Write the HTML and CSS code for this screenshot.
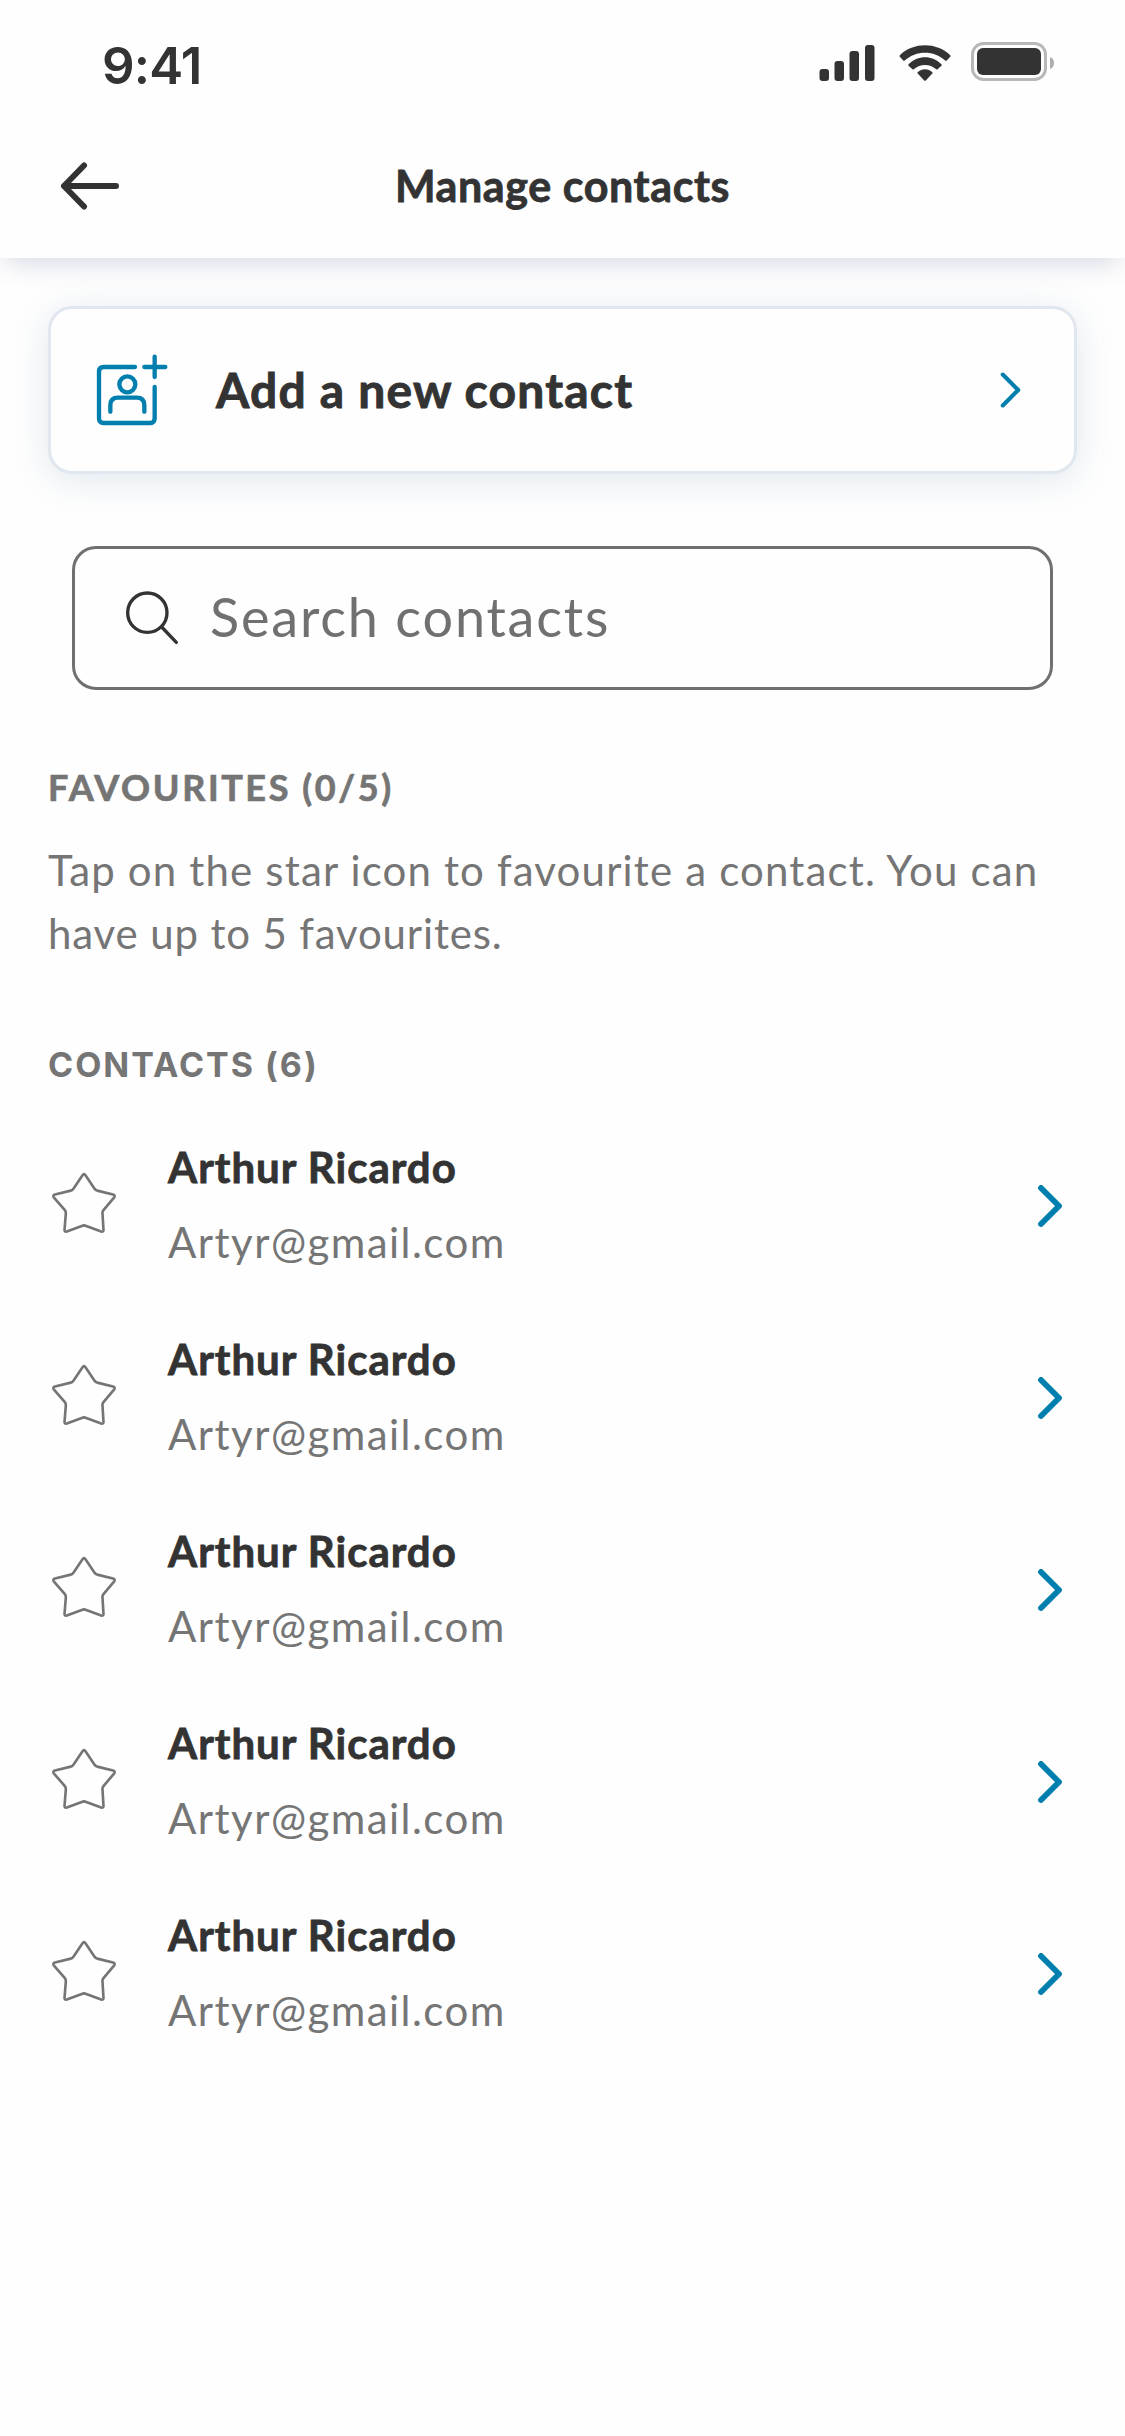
FILE: index.html
```html
<!DOCTYPE html>
<html lang="en">
<head>
<meta charset="utf-8">
<title>Manage contacts</title>
<link rel="stylesheet" href="styles.css">
</head>
<body>
<svg class="sprite" aria-hidden="true">
  <symbol id="star" viewBox="62 424 200 188"><path d="M158 435Q162 428 166 435L194 476Q197 480 202 482L250 494Q258 497 253 503L221 541Q218 545 218 550L221 601Q221 608 214 606L169 589Q162 586 155 589L110 606Q103 608 103 601L107 550Q107 545 104 541L71 503Q66 497 74 494L122 482Q127 481 130 476Z"/></symbol>
  <symbol id="chevron" viewBox="0 0 24 42"><path d="M3 3L21 21L3 39"/></symbol>
</svg>
<header class="header">
  <div class="status">
    <span class="time">9:41</span>
    <div class="indicators">
      <svg class="solid" width="56" height="39" viewBox="0 0 56 39"><rect x="0.5" y="27" width="9.5" height="12" rx="3"/><rect x="15.5" y="19" width="9.5" height="20" rx="3"/><rect x="30.5" y="9" width="9.5" height="30" rx="3"/><rect x="46" y="3" width="9.5" height="36" rx="3"/></svg>
      <svg class="solid" width="52" height="39" viewBox="0 0 52 39"><path d="M.8 13.2C14.500 0 37.500 0 51.200 13.200Q51.900 14 51.200 14.800L47.800 18.400Q47 19.200 46.200 18.500C35 8 17 8 5.800 18.500Q5 19.200 4.200 18.400L.8 14.800Q.1 14 .8 13.200ZM9.600 22.300C18.500 12.900 33.500 12.900 42.400 22.300Q43.100 23 42.400 23.700L38.600 27.300Q38 27.900 37.200 27.300C31 21.400 21 21.400 14.800 27.300Q14 27.900 13.400 27.300L9.600 23.700Q8.900 23 9.600 22.300ZM18.700 30.200C22.500 26.200 29.500 26.200 33.300 30.200Q34 30.900 33.300 31.600L26.800 38.500Q26 39.200 25.200 38.500L18.700 31.600Q18 30.900 18.700 30.200Z"/></svg>
      <svg width="84" height="39" viewBox="0 0 84 39"><rect x="1.500" y="1.500" width="73" height="36" rx="11" fill="none" stroke="#b8b8b8" stroke-width="3"/><rect x="6" y="6" width="64" height="27" rx="6" fill="#333"/><path d="M79 15Q83 16.500 83 21T79 27Z" fill="#adadad"/></svg>
    </div>
  </div>
  <nav class="nav">
    <svg class="back" width="60" height="50" viewBox="0 0 60 50"><path d="M56 25H4M24 4.500L4 25L24 45.500"/></svg>
    <h1 class="title">Manage contacts</h1>
  </nav>
</header>
<main class="content">
  <div class="add">
    <svg class="add-icon" width="72" height="72" viewBox="36 30 216 216"><path d="M153 69H59Q45 69 45 83V223Q45 237 59 237H199Q212 237 212 223V129M181 69H244M212 38V99M79 203V184Q79 161 102 161H158Q181 161 181 184V203"/><circle cx="130" cy="121" r="24"/></svg>
    <span class="add-label">Add a new contact</span>
    <svg class="chevron" width="21" height="36"><use href="#chevron"/></svg>
  </div>
  <div class="search">
    <svg class="search-icon" width="56" height="56" viewBox="42 30 168 168"><circle cx="112" cy="98" r="59"/><path d="M155 141L199 187"/></svg>
    <span class="placeholder">Search contacts</span>
  </div>
  <h2 class="section favourites">FAVOURITES (0/5)</h2>
  <p class="hint">Tap on the star icon to favourite a contact. You can <span class="hint-end">have up to 5 favourites.</span></p>
  <h2 class="section contacts">CONTACTS (6)</h2>
  <ul class="list">
    <li class="row"><svg class="star"><use href="#star"/></svg><div class="person"><span class="name">Arthur Ricardo</span><span class="email">Artyr@gmail.com</span></div><svg class="chevron bold" width="24" height="42"><use href="#chevron"/></svg></li>
    <li class="row"><svg class="star"><use href="#star"/></svg><div class="person"><span class="name">Arthur Ricardo</span><span class="email">Artyr@gmail.com</span></div><svg class="chevron bold" width="24" height="42"><use href="#chevron"/></svg></li>
    <li class="row"><svg class="star"><use href="#star"/></svg><div class="person"><span class="name">Arthur Ricardo</span><span class="email">Artyr@gmail.com</span></div><svg class="chevron bold" width="24" height="42"><use href="#chevron"/></svg></li>
    <li class="row"><svg class="star"><use href="#star"/></svg><div class="person"><span class="name">Arthur Ricardo</span><span class="email">Artyr@gmail.com</span></div><svg class="chevron bold" width="24" height="42"><use href="#chevron"/></svg></li>
    <li class="row"><svg class="star"><use href="#star"/></svg><div class="person"><span class="name">Arthur Ricardo</span><span class="email">Artyr@gmail.com</span></div><svg class="chevron bold" width="24" height="42"><use href="#chevron"/></svg></li>
  </ul>
</main>
</body>
</html>
```
FILE: styles.css
```css
* { box-sizing: border-box; }
body { margin: 0; min-height: 2436px; background: #fefefe; color: #333; font-family: Lato, "Open Sans", sans-serif; }
h1, h2, p, ul { margin: 0; padding: 0; }
svg { display: block; flex: none; fill: none; stroke-linecap: round; stroke-linejoin: round; }
.sprite { display: none; }
.solid { fill: #333; }

.header { height: 258px; background: #fefefe; box-shadow: 0 12px 24px -6px rgba(70, 80, 130, .2); }
.status { display: flex; justify-content: space-between; height: 126px; padding: 42px 70px 0 102px; }
.time { font: 600 51px/48px Inter, sans-serif; letter-spacing: -.8px; }
.indicators { display: flex; }
.indicators svg:nth-child(1) { margin-right: 24px; }
.indicators svg:nth-child(2) { margin-right: 20px; }
.nav { display: grid; grid-template-columns: 120px 1fr 120px; align-items: center; height: 120px; }
.back { margin-left: 60px; stroke: #333; stroke-width: 6; }
.title { text-align: center; font-size: 43px; line-height: 52px; font-weight: 700; letter-spacing: .6px; -webkit-text-stroke: .8px; }

.content { padding: 48px 48px 0; }
.add { display: flex; align-items: center; height: 168px; padding: 0 53px 0 45px; border: 3px solid #e1e7ee; border-radius: 24px; background: #fefefe; box-shadow: 0 6px 36px rgba(60, 100, 150, .15); }
.add-icon { stroke: #007fae; stroke-width: 13; }
.add-label { flex: 1; margin-left: 48px; padding-bottom: 1px; font-size: 48px; line-height: 60px; font-weight: 700; letter-spacing: 1.2px; -webkit-text-stroke: .9px; }
.chevron { stroke: #007fae; stroke-width: 4.8; }
.chevron.bold { stroke-width: 5.8; }

.search { display: flex; align-items: center; height: 144px; margin: 72px 24px 0; padding-left: 49px; border: 3px solid #707070; border-radius: 24px; }
.search-icon { stroke: #333; stroke-width: 10; }
.placeholder { margin-left: 30px; padding-bottom: 3px; color: #707070; font-size: 54px; line-height: 64px; letter-spacing: 1.8px; }

.section { color: #757575; line-height: 44px; font-weight: 700; }
.favourites { margin-top: 75px; font-size: 36px; letter-spacing: 2.6px; -webkit-text-stroke: .7px; }
.contacts { margin-top: 78px; font-family: Inter, sans-serif; font-size: 34px; letter-spacing: 2px; }
.hint { margin-top: 30px; color: #757575; font-size: 42px; line-height: 63px; letter-spacing: 1.16px; }
.hint-end { letter-spacing: .85px; }

.list { margin-top: 23px; list-style: none; }
.row { display: flex; align-items: center; height: 192px; padding: 0 15px 0 3px; }
.star { width: 66px; height: 63px; margin-bottom: 7px; stroke: #757575; stroke-width: 8; }
.person { display: flex; flex: 1; flex-direction: column; gap: 15px; margin-left: 51px; padding-bottom: 4px; }
.name { font-size: 42px; line-height: 60px; font-weight: 700; letter-spacing: 1px; -webkit-text-stroke: .8px; }
.email { color: #757575; font-size: 42px; line-height: 60px; letter-spacing: 1.45px; }
```
